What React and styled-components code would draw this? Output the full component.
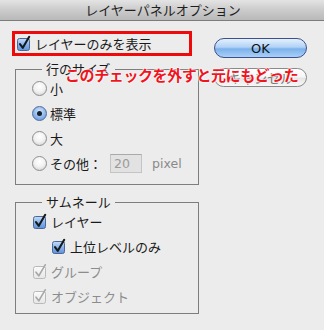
import React from "react";
import styled, { createGlobalStyle } from "styled-components";

const Global = createGlobalStyle`
  html, body { margin: 0; padding: 0; background: #ececec; }
  body { font-family: "Noto Sans CJK JP", "Noto Sans", sans-serif; color: #1a1a1a; }
`;

const Window = styled.div`
  position: relative;
  width: 324px;
  height: 330px;
  background: #ececec;
  overflow: hidden;
`;

const TitleBar = styled.div`
  height: 20px;
  border-bottom: 1px solid #7c7c7c;
  background: linear-gradient(#e4e4e4, #cdcdcd 45%, #b9b9b9);
  display: flex;
  align-items: center;
  justify-content: center;
  font-size: 13px;
  line-height: 20px;
  color: #1e1e1e;
  padding-left: 2px;
`;

const Main = styled.div`
  display: flex;
  align-items: flex-start;
`;

const LeftCol = styled.div`
  width: 198px;
  padding-left: 12px;
  box-sizing: border-box;
  display: flex;
  flex-direction: column;
`;

const RightCol = styled.div`
  margin-left: 16px;
  width: 93px;
  display: flex;
  flex-direction: column;
  gap: 10px;
  margin-top: 17px;
`;

const Highlight = styled.div`
  margin-top: 10px;
  width: 180px;
  height: 25px;
  box-sizing: border-box;
  border: 3px solid #ee0a0a;
  display: flex;
  align-items: center;
  padding-left: 1px;
`;

const Group = styled.fieldset`
  margin: ${(p) => p.$mt}px 0 0 3px;
  width: 184px;
  box-sizing: border-box;
  border: 1px solid #7e7e7e;
  padding: 0 0 ${(p) => p.$pb}px 16px;
  min-width: 0;
`;

const Legend = styled.legend`
  margin-left: 10px;
  padding: 0 4px;
  font-size: 13px;
  line-height: 14px;
  height: 14px;
`;

const Row = styled.div`
  height: 25px;
  display: flex;
  align-items: center;
  padding-left: ${(p) => p.$indent || 0}px;
`;

const Label = styled.span`
  font-size: 13px;
  line-height: 16px;
  margin-left: 3px;
  color: ${(p) => (p.$disabled ? "#8c8c8c" : "#1a1a1a")};
  white-space: nowrap;
`;

const Radio = styled.span`
  width: 15px;
  height: 15px;
  box-sizing: border-box;
  border-radius: 50%;
  border: 1px solid ${(p) => (p.$on ? "#4e6c9e" : "#8e8e8e")};
  background: ${(p) =>
    p.$on
      ? "radial-gradient(circle at 50% 35%, #d4e6fb 0%, #8db6ea 55%, #5a8dd3 100%)"
      : "radial-gradient(circle at 50% 35%, #ffffff 0%, #f1f1f1 50%, #c9c9c9 100%)"};
  display: flex;
  align-items: center;
  justify-content: center;
  flex-shrink: 0;
  &::after {
    content: "";
    display: ${(p) => (p.$on ? "block" : "none")};
    width: 5px;
    height: 5px;
    border-radius: 50%;
    background: #16202e;
  }
`;

const NumBox = styled.span`
  margin-left: 8px;
  width: 32px;
  height: 19px;
  box-sizing: border-box;
  border: 1px solid #c4c4c4;
  border-top-color: #a9a9a9;
  background: #e2e2e2;
  font-family: "DejaVu Sans", "Liberation Sans", sans-serif;
  font-size: 12.5px;
  line-height: 17px;
  color: #9a9a9a;
  padding-left: 3px;
`;

const Unit = styled.span`
  margin-left: 10px;
  font-family: "DejaVu Sans", "Liberation Sans", sans-serif;
  font-size: 12.5px;
  color: #8a8a8a;
`;

const PillButton = styled.div`
  height: ${(p) => p.$h}px;
  box-sizing: border-box;
  border-radius: 10px;
  border: 1px solid ${(p) => (p.$primary ? "#3e4f8c" : "#8a8a8a")};
  background: ${(p) =>
    p.$primary
      ? "linear-gradient(#e4f0fd 0%, #b2d2f6 45%, #7cb1ec 55%, #a9d0f7 100%)"
      : "linear-gradient(#ffffff 0%, #f6f6f6 45%, #e6e6e6 55%, #f7f7f7 100%)"};
  display: flex;
  align-items: center;
  justify-content: center;
  font-family: ${(p) =>
    p.$primary ? '"DejaVu Sans", "Liberation Sans", sans-serif' : '"Noto Sans CJK JP", sans-serif'};
  font-size: 13px;
  color: ${(p) => (p.$primary ? "#111" : "#777")};
`;

const Note = styled.div`
  position: absolute;
  left: 65px;
  top: 65px;
  font-size: 15px;
  letter-spacing: -0.4px;
  font-weight: 700;
  line-height: 20px;
  color: #f0141e;
  white-space: nowrap;
  text-shadow: 0 0 1px #fff, 0 0 1px #fff, 0 0 2px #fff, 0 0 2px #fff;
`;

function Check({ disabled }) {
  return (
    <svg width="16" height="16" viewBox="0 0 16 16" style={{ flexShrink: 0, overflow: "visible" }}>
      <defs>
        <linearGradient id="cbBlue" x1="0" y1="0" x2="0" y2="1">
          <stop offset="0" stopColor="#c6dcf7" />
          <stop offset="0.5" stopColor="#88b3ea" />
          <stop offset="1" stopColor="#5d92da" />
        </linearGradient>
        <linearGradient id="cbGray" x1="0" y1="0" x2="0" y2="1">
          <stop offset="0" stopColor="#fbfbfb" />
          <stop offset="1" stopColor="#e6e6e6" />
        </linearGradient>
      </defs>
      <rect
        x="1.5"
        y="2.5"
        width="12"
        height="12"
        rx="2"
        fill={disabled ? "url(#cbGray)" : "url(#cbBlue)"}
        stroke={disabled ? "#b9b9b9" : "#4c6795"}
        strokeWidth="1"
      />
      <path
        d="M4 8.2 L6.8 11.8 L13.2 0.8"
        fill="none"
        stroke={disabled ? "#a6a6a6" : "#14181f"}
        strokeWidth={disabled ? 1.6 : 2.1}
        strokeLinecap="round"
        strokeLinejoin="round"
      />
    </svg>
  );
}

export default function App() {
  return (
    <>
      <Global />
      <Window>
        <TitleBar>レイヤーパネルオプション</TitleBar>
        <Main>
          <LeftCol>
            <Highlight>
              <Check />
              <Label>レイヤーのみを表示</Label>
            </Highlight>
            <Group $mt={6} $pb={8}>
              <Legend>行のサイズ</Legend>
              <Row>
                <Radio />
                <Label>小</Label>
              </Row>
              <Row>
                <Radio $on />
                <Label>標準</Label>
              </Row>
              <Row>
                <Radio />
                <Label>大</Label>
              </Row>
              <Row>
                <Radio />
                <Label>その他：</Label>
                <NumBox>20</NumBox>
                <Unit>pixel</Unit>
              </Row>
            </Group>
            <Group $mt={10} $pb={4}>
              <Legend>サムネール</Legend>
              <Row>
                <Check />
                <Label>レイヤー</Label>
              </Row>
              <Row $indent={19}>
                <Check />
                <Label>上位レベルのみ</Label>
              </Row>
              <Row>
                <Check disabled />
                <Label $disabled>グループ</Label>
              </Row>
              <Row>
                <Check disabled />
                <Label $disabled>オブジェクト</Label>
              </Row>
            </Group>
          </LeftCol>
          <RightCol>
            <PillButton $primary $h={20}>OK</PillButton>
            <PillButton $h={19}>キャンセル</PillButton>
          </RightCol>
        </Main>
        <Note>このチェックを外すと元にもどった</Note>
      </Window>
    </>
  );
}
